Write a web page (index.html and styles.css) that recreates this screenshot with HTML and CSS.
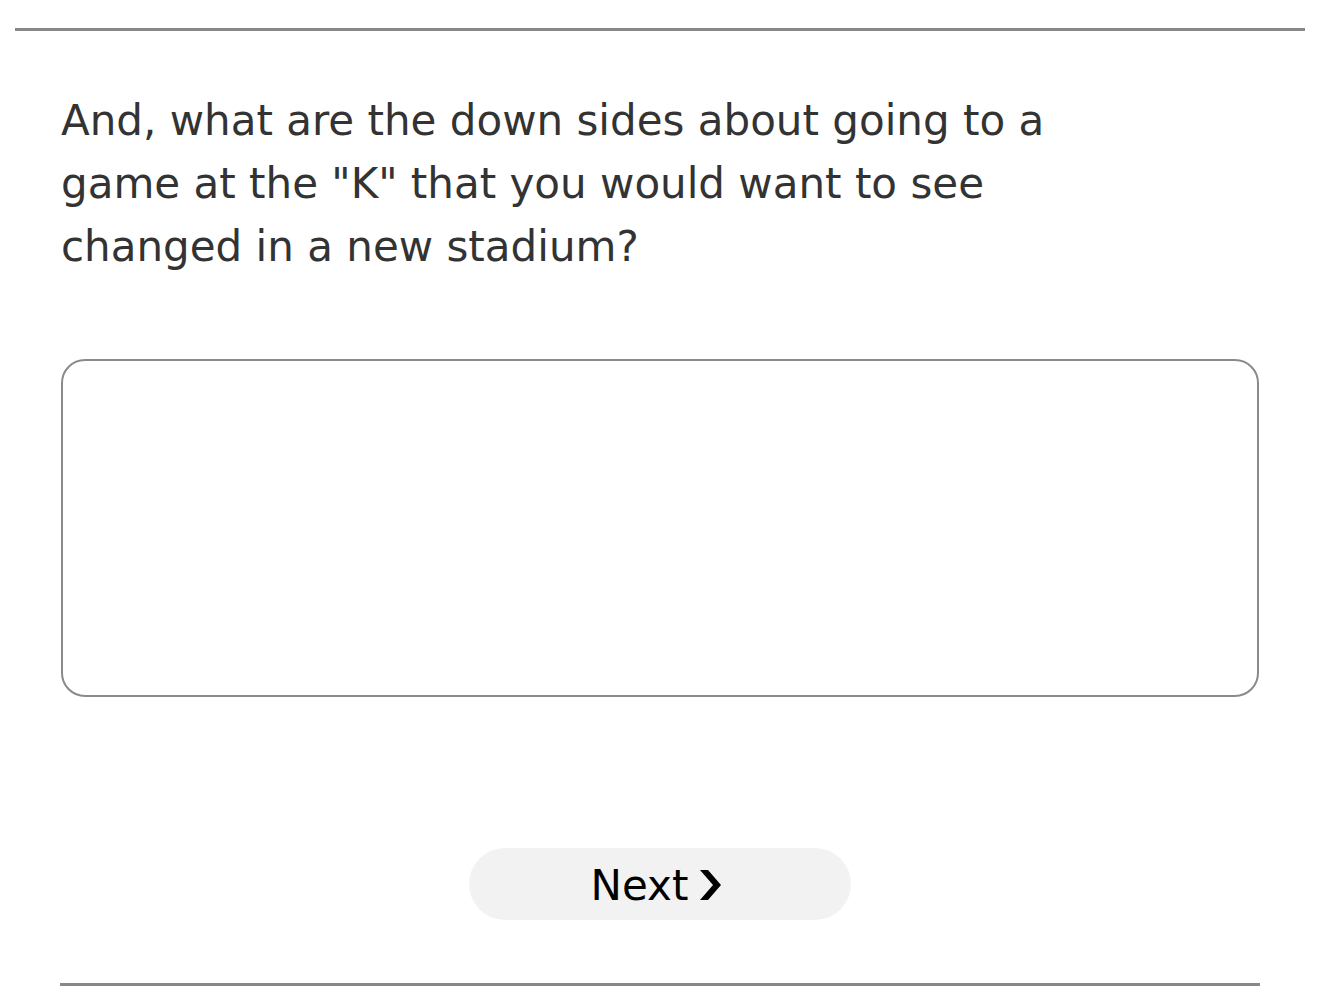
FILE: index.html
```html
<!DOCTYPE html>
<html>
<head>
<meta charset="utf-8">
<link rel="stylesheet" href="styles.css">
</head>
<body>
<div class="page">
  <hr class="top-rule">
  <div class="content">
    <p class="question">And, what are the down sides about going to a game at the "K" that you would want to see changed in a new stadium?</p>
    <textarea class="answer"></textarea>
    <div class="actions">
      <button class="next"><span class="label">Next</span><svg class="chev" width="21" height="30" viewBox="0 0 21 30"><polygon points="0,0 8,0 21,15 8,30 0,30 13,15" fill="#000"/></svg></button>
    </div>
    <hr class="bottom-rule">
  </div>
</div>
</body>
</html>
```
FILE: styles.css
```css
html, body {
  margin: 0;
  padding: 0;
  background: #fff;
}
.page {
  width: 1320px;
  font-family: "DejaVu Sans", "Noto Sans", sans-serif;
  color: #333;
}
.top-rule {
  margin: 28px 15px 0 15px;
  border: 0;
  height: 3px;
  background: #888;
}
.content {
  padding: 0 61px 0 61px;
  display: flex;
  flex-direction: column;
}
.question {
  margin: 58px 0 0 0;
  width: 1080px;
  font-size: 42px;
  line-height: 63px;
}
.answer {
  margin-top: 81px;
  box-sizing: border-box;
  width: 1198px;
  height: 338px;
  border: 2px solid #8a8a8e;
  border-radius: 24px;
  resize: none;
  outline: none;
}
.actions {
  display: flex;
  justify-content: center;
  margin-top: 151px;
}
.next {
  width: 382px;
  height: 72px;
  border: 0;
  border-radius: 36px;
  background: #f2f2f2;
  font-family: "DejaVu Sans", "Noto Sans", sans-serif;
  font-size: 42px;
  color: #000;
  padding: 0 8px 0 0;
  display: flex;
  align-items: center;
  justify-content: center;
  gap: 12px;
}
.label {
  margin-top: 2px;
}
.chev {
  display: block;
  margin-top: 2px;
}
.bottom-rule {
  margin: 63px 0 0 -1px;
  width: 1200px;
  border: 0;
  height: 3px;
  background: #888;
}
```
